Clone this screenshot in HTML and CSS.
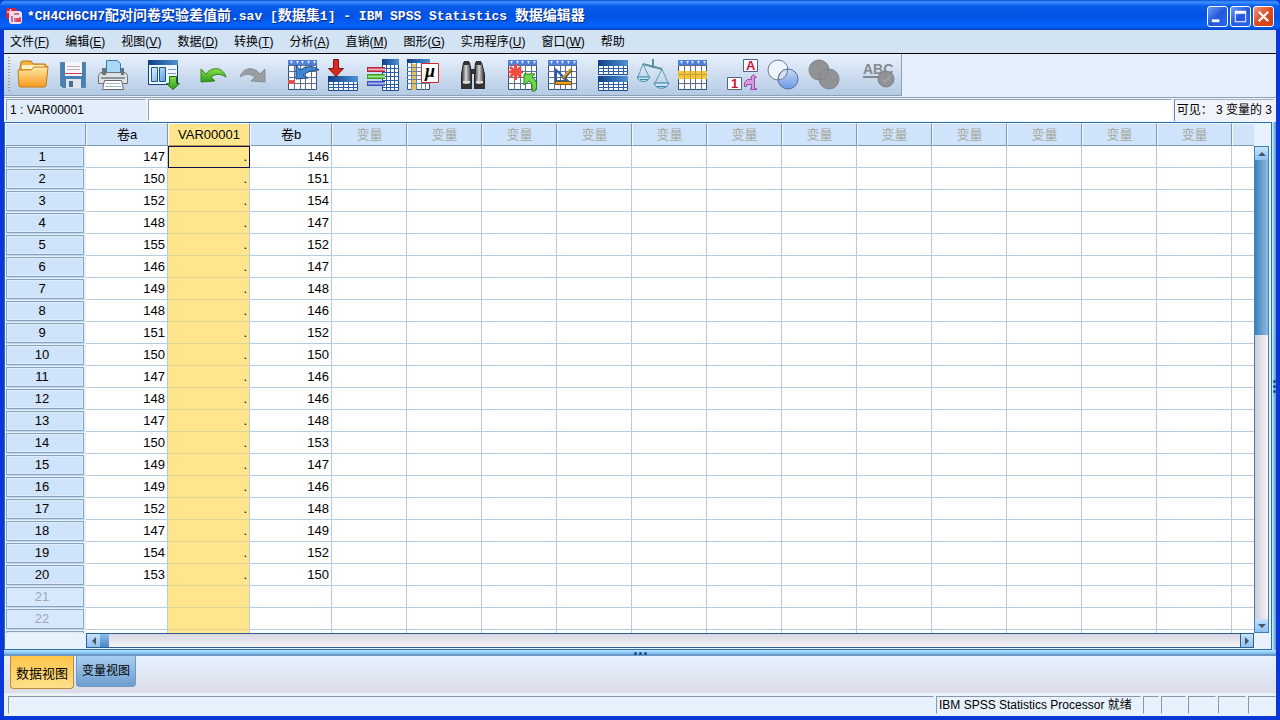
FILE: index.html
```html
<!DOCTYPE html>
<html lang="zh-CN">
<head>
<meta charset="utf-8">
<title>IBM SPSS Statistics 数据编辑器</title>
<link rel="stylesheet" href="styles.css">
</head>
<body>
<svg width="0" height="0" class="defs" aria-hidden="true">
  <defs>
    <linearGradient id="gold" x1="0" y1="0" x2="0" y2="1"><stop offset="0" stop-color="#ffe9a8"/><stop offset="1" stop-color="#f79a1c"/></linearGradient>
    <linearGradient id="navy" x1="0" y1="0" x2="1" y2="0"><stop offset="0" stop-color="#0f3f86"/><stop offset="1" stop-color="#4d93d6"/></linearGradient>
    <linearGradient id="pane" x1="0" y1="0" x2="1" y2="1"><stop offset="0" stop-color="#e6f3ff"/><stop offset="1" stop-color="#5a9ee0"/></linearGradient>
    <linearGradient id="leaf" x1="0" y1="0" x2="0" y2="1"><stop offset="0" stop-color="#8be04a"/><stop offset="1" stop-color="#2c9a1c"/></linearGradient>
    <linearGradient id="steel" x1="0" y1="0" x2="1" y2="0"><stop offset="0" stop-color="#222"/><stop offset=".45" stop-color="#d8d8d8"/><stop offset="1" stop-color="#222"/></linearGradient>
    <linearGradient id="orb" x1="0" y1="0" x2="0" y2="1"><stop offset="0" stop-color="#c4d8f8"/><stop offset="1" stop-color="#6d9ae4"/></linearGradient>
    <symbol id="sheet" viewBox="0 0 32 32">
      <path fill="#fff" stroke="#34507c" d="M1.500 1.500h28v29h-28z"/>
      <path fill="#4f7fdc" d="M1 1h29v5H1z"/>
      <path fill="none" stroke="#5c6f8e" d="M1 6.500h29M1 12.500h29M1 18.500h29M1 24.500h29M7.500 6v25M13.500 6v25M18.500 6v25M24.500 6v25"/>
      <path fill="#dfe9fc" d="M3 2h3l-1.500 3zM9 2h3l-1.500 3zM14 2h3l-1.500 3zM20 2h3l-1.500 3zM26 2h3l-1.500 3z"/>
    </symbol>
    <symbol id="strip" viewBox="0 0 30 15">
      <path fill="#fff" stroke="#174a8c" d="M.5.5h29v14H.5z"/>
      <path fill="url(#navy)" d="M0 0h30v6H0z"/>
      <path fill="none" stroke="#2a5fa8" d="M0 8.500h30M0 11.500h30M5.500 6v9M10.500 6v9M15.500 6v9M20.500 6v9M25.500 6v9"/>
    </symbol>
  </defs>
</svg>
<div class="window">
  <header class="titlebar">
    <svg class="app-icon" viewBox="0 0 16 16" aria-hidden="true"><rect x="0" y="0" width="11" height="11" rx="3" fill="#d8233f"/><rect x="3" y="3" width="13" height="13" rx="3" fill="#f3e3ec"/><path d="M4.500 1v8M1 4h8" stroke="#f6d4dc" stroke-width="1.500" fill="none"/><path d="M6 14V8M9 14v-4M11.500 14v-3M14 14V9" stroke="#b44a7a" stroke-width="1.500"/><path d="M8 5h5v2H8z" fill="#c8708f"/><path d="M10 10h5v4h-5z" fill="#e44660"/></svg>
    <h1 class="title">*CH4CH6CH7<span class="han">配对问卷实验差值前</span>.sav [<span class="han">数据集</span>1] - IBM SPSS Statistics <span class="han">数据编辑器</span></h1>
    <div class="win-buttons">
      <button class="win-btn" type="button" aria-label="最小化"><svg viewBox="0 0 20 20"><path fill="#fff" d="M4 13h8v3H4z"/></svg></button>
      <button class="win-btn" type="button" aria-label="最大化"><svg viewBox="0 0 20 20"><path fill="#fff" d="M4 4h12v12H4zM5 7v8h10V7z" fill-rule="evenodd"/></svg></button>
      <button class="win-btn close" type="button" aria-label="关闭"><svg viewBox="0 0 20 20"><path stroke="#fff" stroke-width="2.400" d="M5 5l10 10M15 5L5 15"/></svg></button>
    </div>
  </header>

  <nav class="menubar" aria-label="菜单">
    <button type="button">文件(<u>F</u>)</button>
    <button type="button">编辑(<u>E</u>)</button>
    <button type="button">视图(<u>V</u>)</button>
    <button type="button">数据(<u>D</u>)</button>
    <button type="button">转换(<u>T</u>)</button>
    <button type="button">分析(<u>A</u>)</button>
    <button type="button">直销(<u>M</u>)</button>
    <button type="button">图形(<u>G</u>)</button>
    <button type="button">实用程序(<u>U</u>)</button>
    <button type="button">窗口(<u>W</u>)</button>
    <button type="button">帮助</button>
  </nav>

  <div class="toolrow">
    <div class="toolbar" role="toolbar" aria-label="工具栏">
      <span class="grip"></span>
      <div class="group">
        <button class="tool" type="button" aria-label="打开"><svg viewBox="0 0 32 32"><path fill="#f6b23c" stroke="#b86e10" d="M3 9l1-6 2-1h8l2 3h12l2 2v9H2z"/><path fill="#fff1c8" d="M5 6h22v4H5z"/><path fill="url(#gold)" stroke="#c77a14" d="M1 11h13l3-3h14l-2 19-2 1H3l-1-1z"/></svg></button>
        <button class="tool" type="button" aria-label="保存"><svg viewBox="0 0 32 32"><path fill="#4780b4" stroke="#5c86ac" d="M3.500 3.500h25v25h-23l-2-2z"/><path fill="#f4f6fb" d="M8 3h17v14H8z"/><path stroke="#c8a9b6" d="M10 7.500h13M10 10.500h13"/><path stroke="#d53a4e" d="M8 14.500h17"/><path fill="#dfe4ea" d="M9 20h15v9H9z"/><path fill="#476e98" d="M12 22h4v6h-4z"/></svg></button>
        <button class="tool" type="button" aria-label="打印"><svg viewBox="0 0 32 32"><path fill="#a9d7f8" stroke="#3a78a8" d="M9.500 1.500h11l3 3v11h-14z"/><path fill="#dfe2e5" stroke="#6a747d" d="M3.500 13.500h25l2 3v8h-29v-8z"/><path fill="#6c747c" d="M5 9h4v7H5zM24 9h3v7h-3z"/><path fill="#8d949b" d="M4 18h24v2H4z"/><path fill="#fff" stroke="#667" d="M7.500 21.500h17l2 9h-21z"/><path stroke="#9bb" d="M9 24.500h14M8 27.500h16"/></svg></button>
      </div>
      <div class="group">
        <button class="tool" type="button" aria-label="重新调用对话框"><svg viewBox="0 0 32 32"><path fill="#eef6ff" stroke="#123f80" d="M1.500 1.500h29v24h-29z"/><path fill="url(#navy)" d="M1 1h30v5H1z"/><path fill="url(#pane)" stroke="#1b5290" d="M4.500 8.500h6v14h-6zM12.500 8.500h6v14h-6z"/><path stroke="#7f9cc0" d="M21 10.500h8M21 14.500h8"/><path fill="url(#leaf)" stroke="#1a6b14" d="M22.500 17.500h7v7h3l-6.500 6-6.500-6h3z"/></svg></button>
      </div>
      <div class="group">
        <button class="tool" type="button" aria-label="撤销"><svg viewBox="0 0 32 32"><path fill="url(#leaf)" stroke="#31861d" d="M4 10v13l14-1-4-4c4-3 9-4 15 0-3-10-14-11-20-3z"/></svg></button>
        <button class="tool" type="button" aria-label="重做"><svg viewBox="0 0 32 32"><path fill="#9a9da1" stroke="#8b8e92" d="M28 10v13l-14-1 4-4c-4-3-9-4-15 0 3-10 14-11 20-3z"/></svg></button>
      </div>
      <div class="group">
        <button class="tool" type="button" aria-label="转到个案"><svg viewBox="0 0 32 32"><use href="#sheet"/><path fill="#e0544c" d="M1 21h7v4H1z"/><path fill="#3f86d0" stroke="#174a8c" d="M9 6v14l12-1-5-3c4-3 9-5 16-5-6-5-13-4-19 0z"/></svg></button>
        <button class="tool" type="button" aria-label="转到变量"><svg viewBox="0 0 32 32"><use href="#strip" x="1" y="17" width="30" height="15"/><path fill="#d92a20" stroke="#7e130e" d="M6.500.5h5v9h5l-7.500 8-7.500-8h5z"/></svg></button>
        <button class="tool" type="button" aria-label="变量"><svg viewBox="0 0 32 32"><path fill="#fff" stroke="#174a8c" d="M15.500.5h16v31h-16z"/><path fill="url(#navy)" d="M15 0h17v6H15z"/><path stroke="#2a5fa8" fill="none" d="M16 9.500h16M16 13.500h16M16 17.500h16M16 21.500h16M16 25.500h16M16 28.500h16M19.500 6v26M23.500 6v26M27.500 6v26"/><path stroke="#b8203c" stroke-width="5" d="M0 10.500h18"/><path stroke="#3b9e2c" stroke-width="5" d="M0 17.500h18"/><path stroke="#3e50b8" stroke-width="5" d="M0 24.500h18"/><path stroke="#f2aab6" stroke-width="2" d="M1 10.500h17"/><path stroke="#a0ea88" stroke-width="2" d="M1 17.500h17"/><path stroke="#a8b4f4" stroke-width="2" d="M1 24.500h17"/></svg></button>
        <button class="tool" type="button" aria-label="描述统计"><svg viewBox="0 0 32 32"><path fill="#fff" stroke="#34507c" d="M.5.500h22v30H.5z"/><path fill="#e9c15c" d="M5 5h4v26H5z"/><path fill="url(#navy)" d="M0 0h23v4H0z"/><path fill="none" stroke="#6584a9" d="M0 8.500h23M0 12.500h23M0 16.500h23M0 20.500h23M0 24.500h23M4.500 4v27M9.500 4v27M14.500 4v27M18.500 4v27"/><path fill="#fff" stroke="#d92626" d="M14.500 4.500h17v19h-17z"/><text class="mu" x="18" y="18">μ</text></svg></button>
      </div>
      <div class="group">
        <button class="tool" type="button" aria-label="查找"><svg viewBox="0 0 32 32"><path fill="url(#steel)" stroke="#222" d="M6.500 3.500h6l2 10v16h-10v-14z"/><path fill="url(#steel)" stroke="#222" d="M18.500 3.500h6l3 12v14h-10v-16z"/><path fill="#333" d="M13 10h6v5h-6zM4 25h11v5H4zM17 25h11v5H17zM7 2h5v4H7zM19 2h5v4h-5z"/><path stroke="#ddd" stroke-width="2" d="M6 23h7M19 23h7"/></svg></button>
      </div>
      <div class="group">
        <button class="tool" type="button" aria-label="插入个案"><svg viewBox="0 0 32 32"><use href="#sheet"/><path stroke="#ee4a40" stroke-width="3" d="M8.500 5v16M1 13h15M3 8l11 10M14 8L3 18"/><path fill="#6fd648" stroke="#23861a" d="M17 15h11l-3 3c5 3 6 9 3 14h-3c1-5 0-8-3-10l-5 4z"/></svg></button>
        <button class="tool" type="button" aria-label="插入变量"><svg viewBox="0 0 32 32"><use href="#sheet"/><path fill="none" stroke="#2459b0" stroke-width="2" d="M9 11l12 11H9z"/><path stroke="#4a3c2c" stroke-width="3" d="M24 11l-8 9"/><path stroke="#dc9a25" stroke-width="2" d="M24 10l-8 9"/><path fill="#e8a21c" stroke="#7e5210" d="M8.500 22.500h16v3h-16z"/></svg></button>
      </div>
      <div class="group">
        <button class="tool" type="button" aria-label="拆分文件"><svg viewBox="0 0 32 32"><use href="#strip" x="1" y="1" width="30" height="15"/><use href="#strip" x="1" y="17" width="30" height="15"/></svg></button>
        <button class="tool" type="button" aria-label="加权个案"><svg viewBox="0 0 32 32"><path fill="none" stroke="#5f8f9e" stroke-width="2" d="M6 5l19 5M16 0v9"/><path fill="none" stroke="#5f9ab2" d="M6 5L1 18h11L6 5M25 10l-7 14h13l-6-14"/><path fill="#c8e6f5" stroke="#4387ae" d="M0 18h13c-2 6-11 6-13 0zM17 24h15c-2 7-13 7-15 0z"/><path stroke="#4387ae" d="M3 20.500h8M20 27.500h9"/></svg></button>
        <button class="tool" type="button" aria-label="选择个案"><svg viewBox="0 0 32 32"><use href="#sheet"/><path fill="#f0c63c" d="M1 12h29v8H1z"/><path stroke="#c49c34" fill="none" d="M1 15.500h29M7.500 12v8M13.500 12v8M18.500 12v8M24.500 12v8"/></svg></button>
      </div>
      <div class="group">
        <button class="tool" type="button" aria-label="值标签"><svg viewBox="0 0 32 32"><path fill="#fff" stroke="#55608a" d="M16.500.5h14v12h-14zM.5 18.500h14v12H.5z"/><text class="tag" x="19" y="11">A</text><text class="tag" x="4" y="29">1</text><path fill="#d79be0" stroke="#9a4aa8" d="M26.500 15.500l3 3h-2v11h2v1h-6v-1h1v-4h-5v2h-2v-4l3-3h4v-2h-1z"/></svg></button>
        <button class="tool" type="button" aria-label="使用变量集"><svg viewBox="0 0 32 32"><circle cx="11" cy="11" r="10" fill="#eef5fc" stroke="#6b7c94"/><circle cx="21" cy="20" r="10" fill="url(#orb)" stroke="#5670a0"/><path fill="#d7e3f3" stroke="#6b7c94" d="M20.500 10a10 10 0 0 1-9 11a10 10 0 0 1 9-11z"/></svg></button>
        <button class="tool" type="button" aria-label="显示所有变量"><svg viewBox="0 0 32 32"><g fill="#909296" stroke="#808286"><circle cx="12" cy="11" r="10"/><circle cx="22" cy="20" r="10"/></g><path fill="none" stroke="#808286" d="M21 10a10 10 0 0 1-9 11"/></svg></button>
      </div>
      <div class="group last">
        <button class="tool" type="button" aria-label="拼写检查"><svg viewBox="0 0 32 32"><text class="abc" x="0" y="15">ABC</text><path stroke="#858a90" stroke-width="2" d="M0 18h17"/><circle cx="23" cy="20" r="8" fill="#909296" stroke="#808286"/><path fill="none" stroke="#9ea2a6" stroke-width="2" d="M19 20l3 3 5-6"/></svg></button>
      </div>
    </div>
  </div>

  <div class="cellbar">
    <output class="cell-name">1 : VAR00001</output>
    <input class="cell-edit" type="text" aria-label="单元格编辑器">
    <span class="visible-count">可见： 3 变量的 3</span>
  </div>

  <main class="workspace">
    <div class="pane">
      <div class="sheet">
        <table class="data">
          <colgroup id="cols"><col class="c-row"><col class="c-a"><col class="c-v"><col class="c-b"></colgroup>
          <thead><tr id="head"><th class="corner"></th><th>卷a</th><th class="sel">VAR00001</th><th>卷b</th></tr></thead>
          <tbody id="rows"></tbody>
        </table>
      </div>
      <div class="vscroll">
        <span class="arrow up"></span><span class="thumb"></span><span class="arrow down"></span>
      </div>
      <div class="hscroll">
        <span class="arrow left"></span><span class="thumb"></span><span class="arrow right"></span>
      </div>
    </div>
    <div class="split-v"><i></i><i></i><i></i></div>
  </main>
  <div class="split-h"><i></i><i></i><i></i></div>

  <div class="tabs" role="tablist">
    <button class="tab active" type="button" role="tab" aria-selected="true">数据视图</button>
    <button class="tab" type="button" role="tab" aria-selected="false">变量视图</button>
  </div>

  <footer class="status">
    <span class="slot grow"></span>
    <span class="slot message">IBM SPSS Statistics Processor 就绪</span>
    <span class="slot narrow"></span>
    <span class="slot mid"></span>
    <span class="slot wide"></span>
    <span class="slot wide"></span>
    <span class="slot wide"></span>
  </footer>
</div>
<script src="grid.js"></script>
</body>
</html>
```
FILE: styles.css
```css
* { box-sizing: border-box; }

body {
  margin: 0;
  font: 12px/16px "Liberation Sans", "Noto Sans CJK SC", sans-serif;
  color: #000;
}

button {
  font: inherit;
  color: inherit;
  padding: 0;
  border: 0;
  background: none;
}

.defs { position: absolute; }

.window {
  display: flex;
  flex-direction: column;
  height: 100vh;
  background: #0a38d8;
}

/* Title bar */
.titlebar {
  flex: none;
  display: flex;
  align-items: center;
  gap: 5px;
  height: 30px;
  padding: 2px 6px 0;
  border-radius: 6px 6px 0 0;
  background: linear-gradient(#0a50d8 0, #3c94ff 2px, #0a5cec 6px, #0053e4 16px, #0564fb 26px, #0445c8 30px);
}

.app-icon { width: 16px; height: 16px; }

.title {
  flex: 1;
  margin: 0;
  font: bold 13px/20px "Liberation Mono", "Noto Sans CJK SC", monospace;
  color: #fff;
  text-shadow: 1px 1px #0a2a80;
  white-space: pre;
}

.han { font-size: 14px; }

.win-buttons { display: flex; gap: 2px; }

.win-btn {
  width: 21px;
  height: 21px;
  border: 1px solid #fff;
  border-radius: 3px;
  background: linear-gradient(135deg, #6f9cf8, #2458dc 50%, #2a66ee);
}

.win-btn.close { background: linear-gradient(135deg, #f09a80, #e04a20 50%, #cc3c10); }
.win-btn svg { display: block; width: 19px; height: 19px; }

/* Menu */
.menubar {
  flex: none;
  display: flex;
  gap: 16px;
  height: 24px;
  margin: 0 4px;
  padding: 0 6px;
  background: #d2e3f3;
  border-bottom: 1px solid #000;
}

/* Toolbar */
.toolrow {
  flex: none;
  display: flex;
  margin: 0 4px;
  padding-bottom: 1px;
  background: #e6f0fd;
  border-bottom: 1px solid #8ea0b4;
}

.toolbar {
  display: flex;
  align-items: center;
  gap: 14px;
  height: 42px;
  padding: 0 4px;
  background: linear-gradient(#e8f1fc, #b4cae4);
  border-right: 1px solid #8ea0b4;
  border-bottom: 1px solid #8ea0b4;
}

.grip {
  width: 2px;
  height: 36px;
  margin-right: -9px;
  background: repeating-linear-gradient(#a89c88 0 1px, transparent 1px 3px);
}

.group { display: flex; gap: 4px; }
.group.last { margin-left: 6px; }
.tool { width: 36px; height: 36px; padding: 2px; }
.tool svg { display: block; width: 32px; height: 32px; overflow: visible; }

.mu { font: italic bold 18px "Liberation Serif", serif; }
.tag { font: bold 13px "Liberation Sans", sans-serif; fill: #d0103c; }
.abc { font: bold 14px "Liberation Sans", sans-serif; fill: #858a90; }

/* Cell editor */
.cellbar {
  flex: none;
  display: flex;
  gap: 2px;
  height: 24px;
  margin: 0 4px;
  padding: 1px 2px;
  line-height: 20px;
  background: #eef4fc;
}

.cell-name {
  width: 140px;
  padding-left: 3px;
  background: #e2edfa;
  border: 1px solid;
  border-color: #94a2b2 #e2edfa #e2edfa #94a2b2;
}

.cell-edit {
  flex: 1;
  min-width: 0;
  font: inherit;
  background: #fff;
  border: 1px solid;
  border-color: #94a2b2 #fff #fff #94a2b2;
}

.visible-count {
  padding: 0 2px;
  white-space: nowrap;
  background: #f0f4fa;
  border-left: 1px solid #7c8794;
  border-top: 1px solid #a8b2be;
}

/* Data grid */
.workspace {
  flex: 1;
  min-height: 0;
  display: flex;
  margin: 0 4px;
}

.pane {
  flex: 1;
  min-width: 0;
  display: grid;
  grid-template-columns: minmax(0, 1fr) 17px;
  grid-template-rows: minmax(0, 1fr) 16px;
  background: #e8f2fc;
  border: 1px solid #2d6eb0;
}

.sheet { overflow: hidden; background: #fff; }

.data {
  width: 100%;
  table-layout: fixed;
  border-collapse: separate;
  border-spacing: 0;
  font-size: 13px;
  line-height: 18px;
}

.c-row { width: 81px; }
.c-a, .c-b { width: 82px; }
.c-v { width: 82px; }
.c-var { width: 75px; }

.data th, .data td { height: 22px; padding: 0; }

.data thead th {
  height: 23px;
  font-weight: normal;
  background: #cfe3fb;
  border: 1px solid;
  border-color: #f4f9ff #7c97b4 #7c97b4 #f4f9ff;
}

.data thead th.sel { background: #ffe68c; border-bottom-color: #b09850; }
.data thead th.empty { color: #a6a89c; }
.data thead th.rest { border-right: 0; }

.data tbody th {
  padding-right: 6px;
  font-weight: normal;
  background: #cfe3fb;
  border: 1px solid #7c97b4;
  border-color: #e6f1fc #e6f1fc #c4d6e8;
  border-right-width: 2px;
  box-shadow: inset 0 0 0 1px #86a2c0, inset 0 0 0 2px #dcebfd;
}

.data tbody th.unused { color: #9aa8b8; background-color: #d8e8fc; }

.data td {
  padding: 0 2px;
  text-align: right;
  border-right: 1px solid #b4cce0;
  border-bottom: 1px solid #b4cce0;
}

.data td.sel { padding-right: 2px; background: #ffe68c; border-bottom-color: #dfd39a; }
.data td.current { border: 1px solid #101050; }
.data td.rest { border-right: 0; }

/* Scroll bars */
.vscroll {
  display: flex;
  flex-direction: column;
  margin: 23px 2px 0 0;
  border: 1px solid #3f7fb8;
  background: linear-gradient(90deg, #cfcdd6, #f6f4f8);
}

.hscroll {
  display: flex;
  height: 15px;
  margin-left: 81px;
  border: 1px solid #2c5f94;
  background: linear-gradient(#d6d6e0, #f6f4f6);
}

.arrow {
  flex: none;
  display: flex;
  align-items: center;
  justify-content: center;
  width: 13px;
  height: 13px;
  background: linear-gradient(#c6e2fb, #8fc2ee);
}

.arrow::before {
  content: "";
  border: 4px solid transparent;
}

.up::before { border-bottom-color: #44546a; border-top-width: 0; }
.down::before { border-top-color: #44546a; border-bottom-width: 0; }
.left::before { border-right-color: #44546a; border-left-width: 0; }
.right::before { border-left-color: #44546a; border-right-width: 0; }
.vscroll .down { margin-top: auto; }
.hscroll .right { margin-left: auto; border-left: 1px solid #2c5f94; }

.vscroll .thumb {
  height: 36%;
  background: linear-gradient(90deg, #3f80bc, #8fbce4);
}

.hscroll .thumb {
  width: 9px;
  background: linear-gradient(#8cbcec, #4a88c8);
}

/* Splitters */
.split-v, .split-h {
  display: flex;
  align-items: center;
  justify-content: center;
  gap: 2px;
}

.split-v {
  flex-direction: column;
  width: 4px;
  background: linear-gradient(90deg, #e0f4ff, #7cc0f0 50%, #5a94cc);
}

.split-h {
  flex: none;
  height: 6px;
  margin: 0 4px;
  background: linear-gradient(#b8e4ff, #7cbcf0 60%, #6a98c4 70%);
}

.split-v i, .split-h i {
  width: 3px;
  height: 3px;
  border-radius: 2px;
  background: #1c4884;
}

/* View tabs */
.tabs {
  flex: none;
  display: flex;
  align-items: flex-start;
  gap: 2px;
  height: 37px;
  margin: 0 4px;
  padding: 0 6px;
  background: linear-gradient(#e6f2fe, #dcdce8);
}

.tab {
  height: 31px;
  padding: 0 5px;
  border: 1px solid #6d9bc8;
  border-top: 0;
  border-radius: 0 0 4px 4px;
  background: linear-gradient(#a8cdf0, #6f9fd0);
}

.tab.active {
  height: 33px;
  padding: 4px 5px 0;
  font-size: 13px;
  border-color: #b88c38;
  background: linear-gradient(#ffc44a, #ffe08c);
}

/* Status bar */
.status {
  flex: none;
  display: flex;
  gap: 2px;
  height: 23px;
  margin: 0 4px 4px;
  padding: 3px 0 2px 4px;
  background: #e8f2fc;
}

.slot {
  border: 1px solid #e8f2fc;
  border-left-color: #8c98a8;
  border-top-color: #8c98a8;
}

.grow { flex: 1; }
.message { width: 205px; padding: 0 2px; white-space: nowrap; }
.narrow { width: 16px; }
.mid { width: 25px; }
.wide { width: 28px; }
```
FILE: grid.js
```js
const values = [
  [147, 146], [150, 151], [152, 154], [148, 147], [155, 152],
  [146, 147], [149, 148], [148, 146], [151, 152], [150, 150],
  [147, 146], [148, 146], [147, 148], [150, 153], [149, 147],
  [149, 146], [152, 148], [147, 149], [154, 152], [153, 150]
];
const EMPTY_COLUMNS = 12;
const ROW_COUNT = 23;

const cols = document.getElementById('cols');
const head = document.getElementById('head');
for (let i = 0; i <= EMPTY_COLUMNS; i++) {
  const last = i === EMPTY_COLUMNS;
  const col = document.createElement('col');
  if (!last) col.className = 'c-var';
  cols.append(col);
  const th = document.createElement('th');
  th.className = last ? 'empty rest' : 'empty';
  if (!last) th.textContent = '变量';
  head.append(th);
}

const body = document.getElementById('rows');
for (let r = 0; r < ROW_COUNT; r++) {
  const tr = body.insertRow();
  const th = document.createElement('th');
  if (r < ROW_COUNT - 1) th.textContent = r + 1;
  if (r >= values.length) th.className = 'unused';
  tr.append(th);
  const pair = values[r];
  const cells = pair ? [pair[0], '.', pair[1]] : ['', '', ''];
  cells.forEach((text, i) => {
    const td = tr.insertCell();
    td.textContent = text;
    if (i === 1) td.className = r === 0 ? 'sel current' : 'sel';
  });
  for (let i = 0; i <= EMPTY_COLUMNS; i++) {
    const td = tr.insertCell();
    if (i === EMPTY_COLUMNS) td.className = 'rest';
  }
}
```
